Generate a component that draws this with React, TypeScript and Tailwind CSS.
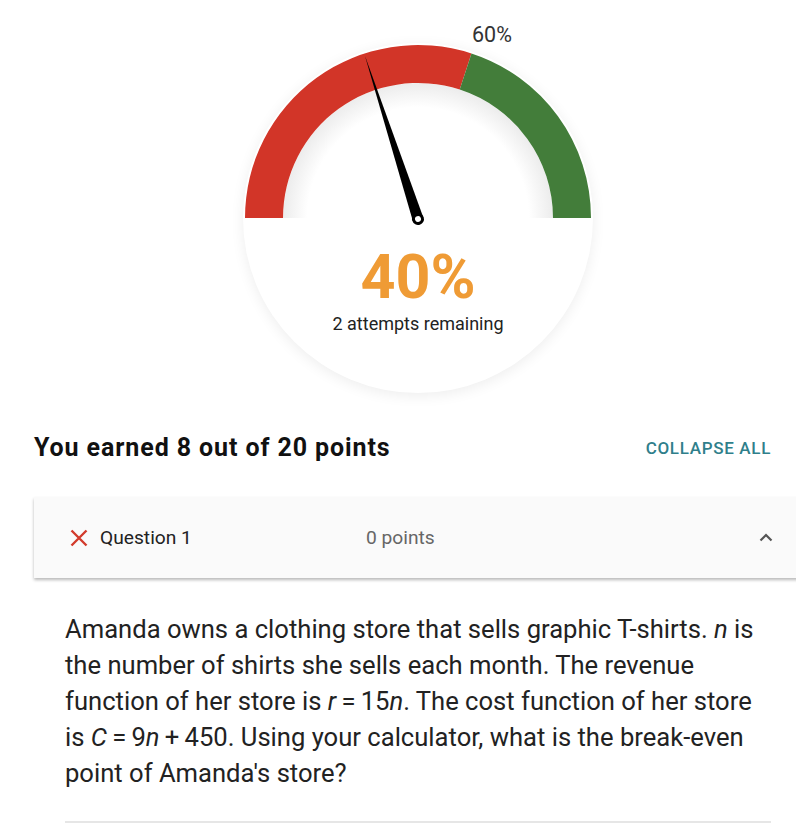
import React from "react";

const CX = 175;
const CY = 175;

function Gauge() {
  return (
    <svg width="350" height="175" viewBox="0 0 350 175" className="overflow-visible">
      <defs>
        <radialGradient id="innerShade" cx="175" cy="175" r="135" gradientUnits="userSpaceOnUse">
          <stop offset="0.82" stopColor="#ffffff" />
          <stop offset="1" stopColor="#ececec" />
        </radialGradient>
      </defs>
      {/* inner area */}
      <path d="M 40 175 A 135 135 0 0 1 310 175 Z" fill="url(#innerShade)" />
      {/* red part, 0 - 60% */}
      <path
        d="M 2 175 A 173 173 0 0 1 228.46 10.47 L 216.72 46.61 A 135 135 0 0 0 40 175 Z"
        fill="#d23528"
      />
      {/* green part, 60 - 100% */}
      <path
        d="M 228.46 10.47 A 173 173 0 0 1 348 175 L 310 175 A 135 135 0 0 0 216.72 46.61 Z"
        fill="#437d3a"
      />
      {/* needle at 40% */}
      <g transform={`rotate(-18 ${CX} ${CY + 1})`}>
        <polygon points={`${CX},4 ${CX + 5.5},${CY + 1} ${CX - 5.5},${CY + 1}`} fill="#000" />
        <circle cx={CX} cy={CY + 1} r="6" fill="#000" />
        <circle cx={CX} cy={CY + 1} r="3" fill="#fff" />
      </g>
    </svg>
  );
}

export default function App() {
  return (
    <div className="w-[796px] h-[828px] overflow-hidden bg-white text-[#212121] font-['Roboto','Liberation_Sans',sans-serif]">
      {/* SCORE GAUGE */}
      <div className="flex justify-center pl-[40px] pt-[43px]">
        <div className="relative w-[350px] h-[350px] rounded-full bg-white shadow-[0_3px_14px_rgba(0,0,0,0.07)] flex flex-col items-center">
          <span className="absolute left-[229px] top-[-21px] text-[21.5px] leading-[26px] text-[#333]">
            60%
          </span>
          <Gauge />
          <div className="mt-[28px] text-[61px] leading-[62px] font-bold text-[#ef9b35]">40%</div>
          <div className="mt-[5px] text-[18px] leading-[22px] text-[#222]">2 attempts remaining</div>
        </div>
      </div>

      {/* SUMMARY */}
      <div className="mt-[41px] pl-[34px] pr-[25px] flex items-center justify-between">
        <h2 className="text-[25px] leading-[28px] font-bold tracking-[0.9px] text-[#111]">
          You earned 8 out of 20 points
        </h2>
        <button className="text-[17px] leading-[20px] font-medium tracking-[0.04em] text-[#2f7f8b]">
          COLLAPSE ALL
        </button>
      </div>

      {/* QUESTION CARD */}
      <div className="mt-[35px] ml-[34px] w-[772px] h-[81px] bg-[#fafafa] shadow-[0_2px_3px_rgba(0,0,0,0.28)] flex items-center pl-[36px] pr-[33px]">
        <div className="w-[296px] flex items-center gap-[12px]">
          <svg width="18" height="18" viewBox="0 0 18 18">
            <path d="M 1.5 1.5 L 16.5 16.5 M 16.5 1.5 L 1.5 16.5" stroke="#d23b2c" strokeWidth="2.4" />
          </svg>
          <span className="text-[19.2px] leading-[22px] text-[#222]">Question 1</span>
        </div>
        <span className="text-[19.2px] leading-[22px] text-[#666]">0 points</span>
        <svg className="ml-auto" width="14" height="9" viewBox="0 0 14 9">
          <path d="M 1.5 7.5 L 7 2 L 12.5 7.5" fill="none" stroke="#555" strokeWidth="2.2" />
        </svg>
      </div>

      {/* QUESTION BODY */}
      <div className="mt-[33px] ml-[65px] w-[706px]">
        <p className="w-[730px] whitespace-nowrap text-[25.6px] leading-[36px] text-[#222]">
          Amanda owns a clothing store that sells graphic T-shirts. <i>n</i> is
          <br />
          the number of shirts she sells each month. The revenue
          <br />
          function of her store is <i>r</i>&thinsp;=&thinsp;15<i>n</i>. The cost function of her store
          <br />
          is <i>C</i>&thinsp;=&thinsp;9<i>n</i>&thinsp;+&thinsp;450. Using your calculator, what is the break-even
          <br />
          point of Amanda's store?
        </p>
        <div className="mt-[30px] h-[2px] bg-[#e6e6e6]" />
      </div>
    </div>
  );
}
